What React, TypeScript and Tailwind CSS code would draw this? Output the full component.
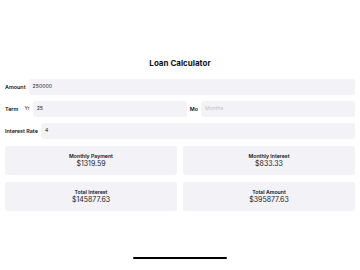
import React from "react";

function Row({ label, children }: { label: string; children: React.ReactNode }) {
  return (
    <div className="flex items-center gap-[3px] h-[16px]">
      <span className="text-[5.4px] font-semibold text-[#111]">{label}</span>
      {children}
    </div>
  );
}

function Field({ value, placeholder }: { value?: string; placeholder?: string }) {
  return (
    <div className="flex-1 h-[16px] rounded-[3px] bg-[#f2f2f7] flex items-center px-[4px]">
      {value ? (
        <span className="text-[5.2px] text-[#222]">{value}</span>
      ) : (
        <span className="text-[5.2px] text-[#c4c4c8]">{placeholder}</span>
      )}
    </div>
  );
}

function Card({ label, value }: { label: string; value: string }) {
  return (
    <div className="h-[29px] rounded-[3px] bg-[#f2f2f7] flex flex-col items-center justify-center">
      <span className="text-[5.2px] leading-[6px] font-semibold text-[#111]">{label}</span>
      <span className="text-[7px] leading-[9px] text-[#222]">{value}</span>
    </div>
  );
}

export default function App() {
  return (
    <div
      className="w-[360px] h-[270px] bg-white flex flex-col px-[5px]"
      style={{ fontFamily: "Inter, 'Liberation Sans', sans-serif" }}
    >
      <h1 className="mt-[58px] text-center text-[8px] leading-[10px] font-bold text-[#111]">
        Loan Calculator
      </h1>
      <div className="mt-[11px] flex flex-col gap-[6px]">
        <Row label="Amount">
          <Field value="250000" />
        </Row>
        <Row label="Term">
          <span className="text-[5.2px] text-[#333] ml-[3px]">Yr</span>
          <Field value="25" />
          <span className="text-[5.4px] font-semibold text-[#111]">Mo</span>
          <Field placeholder="Months" />
        </Row>
        <Row label="Interest Rate">
          <Field value="4" />
        </Row>
      </div>
      <div className="mt-[7px] grid grid-cols-2 gap-x-[6px] gap-y-[7px]">
        <Card label="Monthly Payment" value="$1319.59" />
        <Card label="Monthly Interest" value="$833.33" />
        <Card label="Total Interest" value="$145877.63" />
        <Card label="Total Amount" value="$395877.63" />
      </div>
      <div className="mt-auto mb-[11px] self-center w-[94px] h-[2px] rounded-full bg-black" />
    </div>
  );
}
